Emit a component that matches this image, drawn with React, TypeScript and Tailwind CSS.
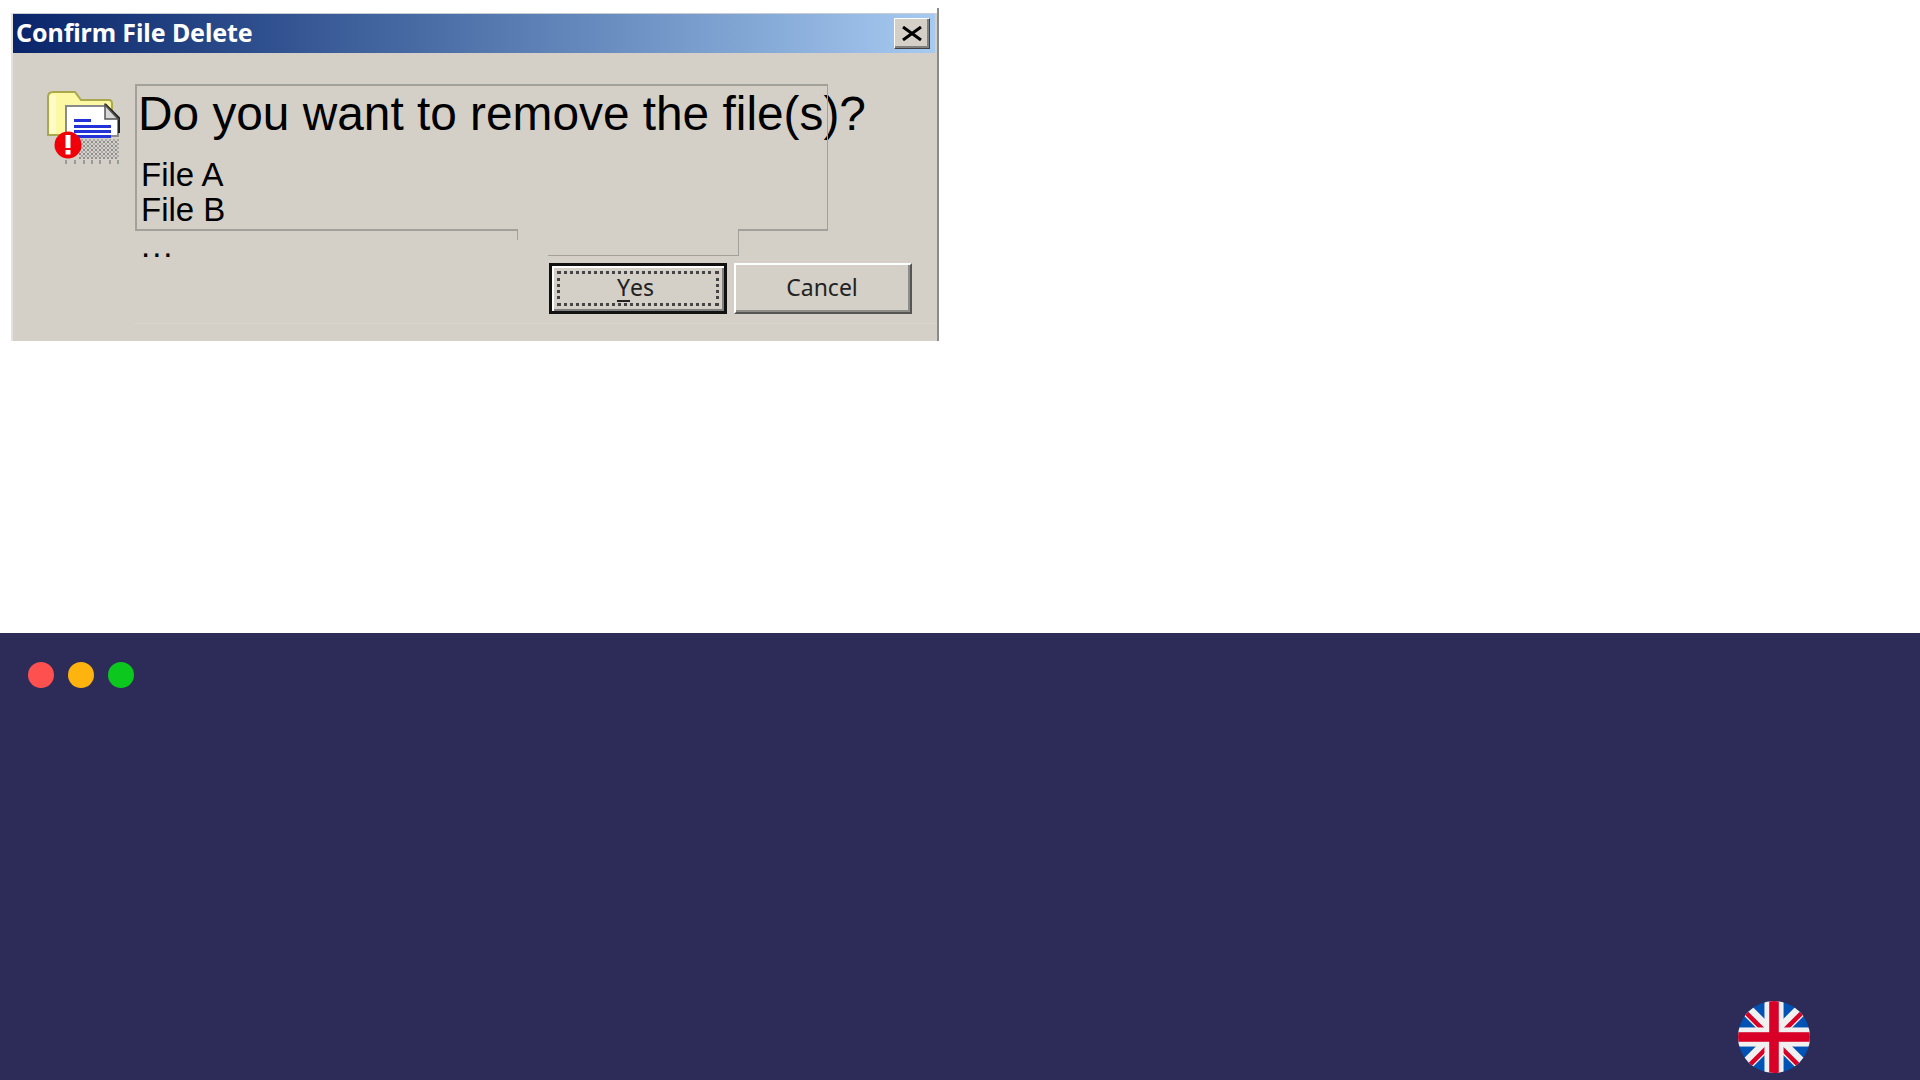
import React from 'react';

const sans = "font-['Liberation_Sans',Arial,sans-serif]";

const DeleteIcon = () => (
  <svg viewBox="0 0 74 76" className="w-[74px] h-[76px] blur-[0.5px]">
    <defs>
      <pattern id="dither" width="4" height="4" patternUnits="userSpaceOnUse">
        <rect width="4" height="4" fill="#d4d0c8" />
        <rect width="2" height="2" fill="#8f8f8f" />
        <rect x="2" y="2" width="2" height="2" fill="#a8a8a8" />
      </pattern>
    </defs>
    {/* Folder */}
    <path d="M1 46 V8 Q1 3 6 3 H28 L34 11 H62 Q65 11 65 15 V30 H30 V46 Z" fill="#fdf8a4" stroke="#a9a84c" strokeWidth="2" />
    <rect x="3" y="6" width="6" height="39" fill="#fffbc8" />
    {/* Page */}
    <path d="M19 17 H58 L71 30 V47 H19 Z" fill="#ffffff" stroke="#8a8a8a" strokeWidth="2" />
    <path d="M58 15 L72 29 V44" fill="none" stroke="#222222" strokeWidth="2" />
    <path d="M58 16 V30 H71 Z" fill="#d6d6d6" stroke="#555555" strokeWidth="1.5" />
    {/* Text lines */}
    <rect x="27" y="30" width="17" height="3" fill="#2430d8" />
    <rect x="27" y="36" width="37" height="3" fill="#2430d8" />
    <rect x="27" y="41" width="37" height="3" fill="#2430d8" />
    <rect x="27" y="46" width="37" height="3" fill="#2430d8" />
    {/* Shadow */}
    <rect x="32" y="50" width="40" height="20" fill="url(#dither)" />
    <path d="M18 73 h2 M27 73 h2 M36 73 h2 M44 73 h2 M52 73 h2 M62 73 h2 M70 73 h2" stroke="#9a9a9a" strokeWidth="4" />
    {/* Alert */}
    <circle cx="21" cy="56" r="13.5" fill="#f00008" />
    <rect x="18.5" y="46" width="5" height="13" fill="#ffffff" />
    <rect x="18.5" y="61" width="5" height="4.5" fill="#ffffff" />
  </svg>
);

const UkFlag = () => (
  <svg viewBox="0 0 512 512" className="w-[72px] h-[72px]">
    <defs>
      <clipPath id="flagClip">
        <circle cx="256" cy="256" r="256" />
      </clipPath>
    </defs>
    <g clipPath="url(#flagClip)">
      <rect width="512" height="512" fill="#0052b4" />
      <path d="M0 0 L512 512 M512 0 L0 512" stroke="#f0f0f0" strokeWidth="88" />
      <path d="M60 60 L205 205 M307 307 L452 452" stroke="#d80027" strokeWidth="32" transform="translate(-13 13)" />
      <path d="M452 60 L307 205 M205 307 L60 452" stroke="#d80027" strokeWidth="32" transform="translate(13 13)" />
      <rect x="188" width="136" height="512" fill="#f0f0f0" />
      <rect y="188" width="512" height="136" fill="#f0f0f0" />
      <rect x="222" width="68" height="512" fill="#d80027" />
      <rect y="222" width="512" height="68" fill="#d80027" />
    </g>
  </svg>
);

const App: React.FC = () => {
  return (
    <div className="w-[1920px] h-[1080px] flex flex-col overflow-hidden bg-white">
      {/* Top area with the dialog */}
      <div className="h-[633px] pt-[13px] pl-[11px]">
        <div className="relative w-[928px] h-[328px] bg-[#d4d0c8] border-l-2 border-l-[#e4e2dc] flex flex-col">
          <div className="absolute right-0 -top-[5px] bottom-0 w-[2px] bg-[#8a8a88]" />

          {/* Title bar */}
          <div className="h-[40px] mr-[4px] flex items-center justify-between pl-[3px] pr-[5px] bg-gradient-to-r from-[#0a246a] to-[#a6caf0] border-t border-t-[#c8ccd4]">
            <span className="font-['Noto_Sans',sans-serif] font-bold text-[25px] tracking-[-0.1px] text-white leading-none -mt-[2px]">Confirm File Delete</span>
            <div className="w-[36px] h-[31px] -mt-[1px] bg-[#d4d0c8] border border-t-white border-l-white border-r-[#404040] border-b-[#404040] shadow-[inset_-2px_-2px_0_#808080] flex items-center justify-center">
              <svg viewBox="0 0 22 15" className="w-[22px] h-[15px]">
                <path d="M2 1 L20 14 M20 1 L2 14" stroke="#000000" strokeWidth="3" />
              </svg>
            </div>
          </div>

          {/* Body */}
          <div className="relative flex-1 flex pt-[36px] pl-[34px]">
            <DeleteIcon />
            <div className={`ml-[20px] -mt-[2px] flex flex-col text-black ${sans}`}>
              <div className="text-[47.8px] leading-[54px] whitespace-nowrap -ml-[3px]">Do you want to remove the file(s)?</div>
              <div className="mt-[16px] text-[33px] leading-[35px]">File A</div>
              <div className="text-[33px] leading-[35px]">File B</div>
              <div className="text-[33px] leading-[35px] mt-[1px] tracking-[2px]">...</div>
            </div>

            {/* Leftover control outlines */}
            <div className="absolute left-[122px] top-[31px] w-[693px] h-[147px] border-t-2 border-l-2 border-t-[#a3a099] border-l-[#a3a099] border-r border-r-[#a3a099]" />
            <div className="absolute left-[122px] top-[176px] w-[382px] h-[2px] bg-[#a3a099]" />
            <div className="absolute left-[504px] top-[176px] w-[1px] h-[11px] bg-[#a3a099]" />
            <div className="absolute left-[725px] top-[176px] w-[90px] h-[2px] bg-[#a3a099]" />
            <div className="absolute left-[725px] top-[176px] w-[1px] h-[27px] bg-[#a3a099]" />
            <div className="absolute left-[535px] top-[202px] w-[191px] h-[1px] bg-[#a3a099]" />
            <div className="absolute left-[122px] top-[270px] right-[2px] h-[1px] bg-[#d9d6cf]" />

            {/* Buttons */}
            <div className="absolute right-[27px] top-[210px] flex gap-[7px] font-['Noto_Sans',sans-serif] text-[23px] text-[#222222]">
              <button className="w-[178px] h-[51px] border-[3px] border-[#111111] bg-[#d4d0c8] shadow-[inset_2px_2px_0_#ffffff,inset_-2px_-2px_0_#808080] p-[5px]">
                <span className="h-full flex items-center justify-center border-[3px] border-dotted border-[#444444] leading-none pr-[5px] pb-[2px]">
                  <span className="underline underline-offset-[4px] decoration-[2px] [text-decoration-skip-ink:none]">Y</span>es
                </span>
              </button>
              <button className="w-[178px] h-[51px] bg-[#d4d0c8] border-[2px] border-t-white border-l-white border-r-[#555555] border-b-[#555555] shadow-[inset_-2px_-2px_0_#8f8d88] leading-none pb-[3px] pr-[2px]">
                Cancel
              </button>
            </div>
          </div>
        </div>
      </div>

      {/* Bottom band */}
      <div className="flex-1 bg-[#2d2b57] flex flex-col justify-between pt-[29px] pl-[28px] pr-[110px] pb-[7px]">
        <div className="flex gap-[14px]">
          <div className="w-[26px] h-[26px] rounded-full bg-[#ff5050]" />
          <div className="w-[26px] h-[26px] rounded-full bg-[#ffb30f]" />
          <div className="w-[26px] h-[26px] rounded-full bg-[#0cc71e]" />
        </div>
        <div className="flex justify-end">
          <UkFlag />
        </div>
      </div>
    </div>
  );
};

export default App;
